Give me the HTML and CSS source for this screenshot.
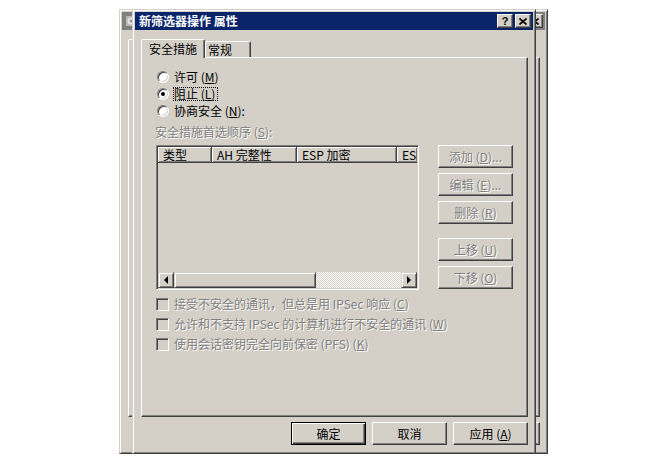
FILE: index.html
```html
<!DOCTYPE html>
<html lang="zh-CN">
<head>
    <meta charset="UTF-8">
    <title>新筛选器操作 属性</title>
    <link rel="stylesheet" href="styles.css">
</head>
<body>
<div class="desk">

    <!-- 뒤쪽 창 (비활성, 가려진 부분은 비워 둠) -->
    <div class="win back">
        <div class="titlebar inactive">
            <span class="app-icon">
                <svg width="12" height="12" viewBox="0 0 12 12">
                    <rect x="1" y="1" width="10" height="10" fill="#b8b8b8"/>
                    <circle cx="6" cy="6" r="3.5" fill="#e6e6e6"/>
                    <circle cx="6" cy="6" r="1.5" fill="#9a9a9a"/>
                </svg>
            </span>
            <span class="title-text"></span>
            <span class="cap-btn">
                <svg width="8" height="7" viewBox="0 0 8 7"><path d="M0.5 0.5 L7.5 6.5 M7.5 0.5 L0.5 6.5" stroke="#000" stroke-width="1.6"/></svg>
            </span>
        </div>
        <div class="content">
            <div class="tabs"><span class="tab sel"></span></div>
            <div class="panel"></div>
            <div class="footer"><span class="btn"></span></div>
        </div>
    </div>

    <!-- 앞쪽 창 -->
    <div class="win front">
        <div class="titlebar">
            <span class="title-text">新筛选器操作 属性</span>
            <span class="cap-btn q">?</span>
            <span class="cap-btn">
                <svg width="8" height="7" viewBox="0 0 8 7"><path d="M0.5 0.5 L7.5 6.5 M7.5 0.5 L0.5 6.5" stroke="#000" stroke-width="1.6"/></svg>
            </span>
        </div>
        <div class="content">
            <div class="tabs">
                <span class="tab sel">安全措施</span>
                <span class="tab">常规</span>
            </div>
            <div class="panel">
                <div class="radios">
                    <div class="radio"><span class="rb"></span><span>许可 (<u>M</u>)</span></div>
                    <div class="radio"><span class="rb on"></span><span class="focus">阻止 (<u>L</u>)</span></div>
                    <div class="radio"><span class="rb"></span><span>协商安全 (<u>N</u>):</span></div>
                </div>
                <div class="caption dim">安全措施首选顺序 (<u>S</u>):</div>

                <div class="list-row">
                    <div class="listview">
                        <div class="lv-head">
                            <span class="col c1">类型</span>
                            <span class="col c2">AH 完整性</span>
                            <span class="col c3">ESP 加密</span>
                            <span class="col c4">ESI</span>
                        </div>
                        <div class="lv-body"></div>
                        <div class="hscroll">
                            <span class="sb-arrow"><i class="tri-left"></i></span>
                            <span class="sb-thumb"></span>
                            <span class="sb-track"></span>
                            <span class="sb-arrow"><i class="tri-right"></i></span>
                        </div>
                    </div>
                    <div class="side-btns">
                        <span class="btn dim">添加 (<u>D</u>)...</span>
                        <span class="btn dim">编辑 (<u>E</u>)...</span>
                        <span class="btn dim">删除 (<u>R</u>)</span>
                        <span class="btn dim gap-top">上移 (<u>U</u>)</span>
                        <span class="btn dim">下移 (<u>O</u>)</span>
                    </div>
                </div>

                <div class="checks">
                    <div class="check"><span class="cb"></span><span class="dim">接受不安全的通讯，但总是用 IPSec 响应 (<u>C</u>)</span></div>
                    <div class="check"><span class="cb"></span><span class="dim">允许和不支持 IPSec 的计算机进行不安全的通讯 (<u>W</u>)</span></div>
                    <div class="check"><span class="cb"></span><span class="dim">使用会话密钥完全向前保密 (PFS) (<u>K</u>)</span></div>
                </div>
            </div>
            <div class="footer">
                <span class="btn default">确定</span>
                <span class="btn">取消</span>
                <span class="btn">应用 (<u>A</u>)</span>
            </div>
        </div>
    </div>

</div>
</body>
</html>
```

FILE: styles.css
```css
/* 기본 */
* {
    box-sizing: border-box;
}

body {
    margin: 0;
    background: #fff;
    font-family: "Noto Sans CJK SC", "Noto Sans", sans-serif;
    font-size: 12px;
    color: #000;
}

u {
    text-decoration: underline;
    text-underline-offset: 1px;
}

.desk {
    position: relative;
    width: 662px;
    height: 464px;
    overflow: hidden;
}

/* 창 테두리 */
.win {
    position: absolute;
    top: 9px;
    height: 445px;
    display: flex;
    flex-direction: column;
    padding: 2px;
    background: #d4d0c8;
    border: 1px solid;
    border-color: #d4d0c8 #404040 #404040 #d4d0c8;
    box-shadow: inset 1px 1px #fff, inset -1px -1px #808080;
}

.win.back {
    left: 119px;
    width: 429px;
    z-index: 1;
}

.win.front {
    left: 132px;
    width: 404px;
    z-index: 2;
}

/* 제목 표시줄 */
.titlebar {
    height: 18px;
    display: flex;
    align-items: center;
    padding: 0 2px;
    background: #0a246a;
    color: #fff;
    font-weight: bold;
}

.titlebar.inactive {
    background: #808080;
    color: #d4d0c8;
}

.app-icon {
    display: flex;
    width: 14px;
    height: 14px;
    align-items: center;
    justify-content: center;
}

.title-text {
    flex: 1;
    padding-left: 2px;
    line-height: 18px;
    white-space: nowrap;
}

.cap-btn {
    width: 16px;
    height: 14px;
    display: flex;
    align-items: center;
    justify-content: center;
    background: #d4d0c8;
    border: 1px solid;
    border-color: #fff #404040 #404040 #fff;
    box-shadow: inset -1px -1px #808080;
    color: #000;
}

.cap-btn + .cap-btn {
    margin-left: 2px;
}

.cap-btn.q {
    font-family: "Liberation Sans", sans-serif;
    font-size: 11px;
    font-weight: bold;
    line-height: 12px;
}

/* 본문 */
.content {
    flex: 1;
    display: flex;
    flex-direction: column;
    padding: 9px 5px 0 6px;
}

/* 탭 */
.tabs {
    display: flex;
    align-items: flex-end;
    height: 18px;
    position: relative;
    z-index: 1;
}

.tab {
    width: 46px;
    height: 16px;
    padding-left: 2px;
    line-height: 15px;
    background: #d4d0c8;
    border: 1px solid;
    border-bottom: 0;
    border-color: #fff #404040 transparent #fff;
    border-radius: 2px 2px 0 0;
    box-shadow: inset -1px 0 #808080;
    white-space: nowrap;
}

.tab.sel {
    width: 64px;
    height: 19px;
    margin-bottom: -1px;
    padding-left: 0;
    text-align: center;
    line-height: 17px;
}

.panel {
    height: 360px;
    border: 1px solid;
    border-color: #fff #404040 #404040 #fff;
    box-shadow: inset -1px -1px #808080;
    padding: 10px 0 0 14px;
}

/* 비활성 글자 */
.dim {
    color: #808080;
    text-shadow: 1px 1px 0 #fff;
}

/* 라디오 버튼 */
.radio {
    height: 17px;
    display: flex;
    align-items: center;
    line-height: 13px;
}

.rb {
    position: relative;
    width: 12px;
    height: 12px;
    margin: 0 5px 0 1px;
    border-radius: 50%;
    background: #fff;
    border: 1px solid;
    border-color: #808080 #fff #fff #808080;
    box-shadow: inset 1px 1px #404040, inset -1px -1px #d4d0c8;
}

.rb.on::after {
    content: "";
    position: absolute;
    left: 3px;
    top: 3px;
    width: 4px;
    height: 4px;
    border-radius: 50%;
    background: #000;
}

.focus {
    margin-left: -1px;
    padding-right: 2px;
    border: 1px dotted #000;
    line-height: 12px;
}

.caption {
    margin: 6px 0 0 -1px;
    line-height: 14px;
}

/* 목록 */
.list-row {
    display: flex;
    align-items: flex-start;
    margin-top: 6px;
}

.listview {
    width: 263px;
    height: 145px;
    display: flex;
    flex-direction: column;
    padding: 1px;
    border: 1px solid;
    border-color: #808080 #fff #fff #808080;
    box-shadow: inset 1px 1px #404040, inset -1px -1px #d4d0c8;
    overflow: hidden;
}

.lv-head {
    display: flex;
    height: 16px;
    overflow: hidden;
}

.col {
    flex: none;
    padding-left: 5px;
    line-height: 15px;
    white-space: nowrap;
    overflow: hidden;
    border-right: 1px solid #404040;
    border-bottom: 1px solid #404040;
    box-shadow: inset 1px 1px #fff, inset -1px -1px #808080;
}

.c1 { width: 54px; }
.c2 { width: 85px; }
.c3 { width: 100px; }
.c4 { width: 20px; border-right: 0; }

.lv-body {
    flex: 1;
}

.hscroll {
    display: flex;
    height: 16px;
}

.sb-arrow,
.sb-thumb {
    display: flex;
    align-items: center;
    justify-content: center;
    background: #d4d0c8;
    border: 1px solid;
    border-color: #d4d0c8 #404040 #404040 #d4d0c8;
    box-shadow: inset 1px 1px #fff, inset -1px -1px #808080;
}

.sb-arrow {
    width: 16px;
}

.sb-thumb {
    width: 142px;
}

.sb-track {
    flex: 1;
    background: repeating-conic-gradient(#fff 0 25%, #d4d0c8 0 50%) 0 0 / 2px 2px;
}

.tri-left {
    width: 0;
    height: 0;
    border-top: 4px solid transparent;
    border-bottom: 4px solid transparent;
    border-right: 4px solid #000;
}

.tri-right {
    width: 0;
    height: 0;
    border-top: 4px solid transparent;
    border-bottom: 4px solid transparent;
    border-left: 4px solid #000;
}

/* 오른쪽 버튼들 */
.side-btns {
    display: flex;
    flex-direction: column;
    gap: 5px;
    margin-left: 19px;
}

.side-btns .gap-top {
    margin-top: 9px;
}

/* 버튼 */
.btn {
    width: 75px;
    height: 23px;
    display: flex;
    align-items: center;
    justify-content: center;
    background: #d4d0c8;
    border: 1px solid;
    border-color: #fff #404040 #404040 #fff;
    box-shadow: inset -1px -1px #808080;
    white-space: nowrap;
}

.btn.default {
    border: 1px solid #000;
    box-shadow: inset 1px 1px #fff, inset -1px -1px #404040, inset -2px -2px #808080;
}

/* 체크박스 */
.checks {
    margin-top: 4px;
}

.check {
    height: 20px;
    display: flex;
    align-items: center;
    line-height: 14px;
}

.cb {
    width: 13px;
    height: 13px;
    margin-right: 5px;
    background: #d4d0c8;
    border: 1px solid;
    border-color: #808080 #fff #fff #808080;
    box-shadow: inset 1px 1px #404040, inset -1px -1px #d4d0c8;
}

.footer {
    display: flex;
    justify-content: flex-end;
    gap: 6px;
    margin-top: 5px;
}
```
